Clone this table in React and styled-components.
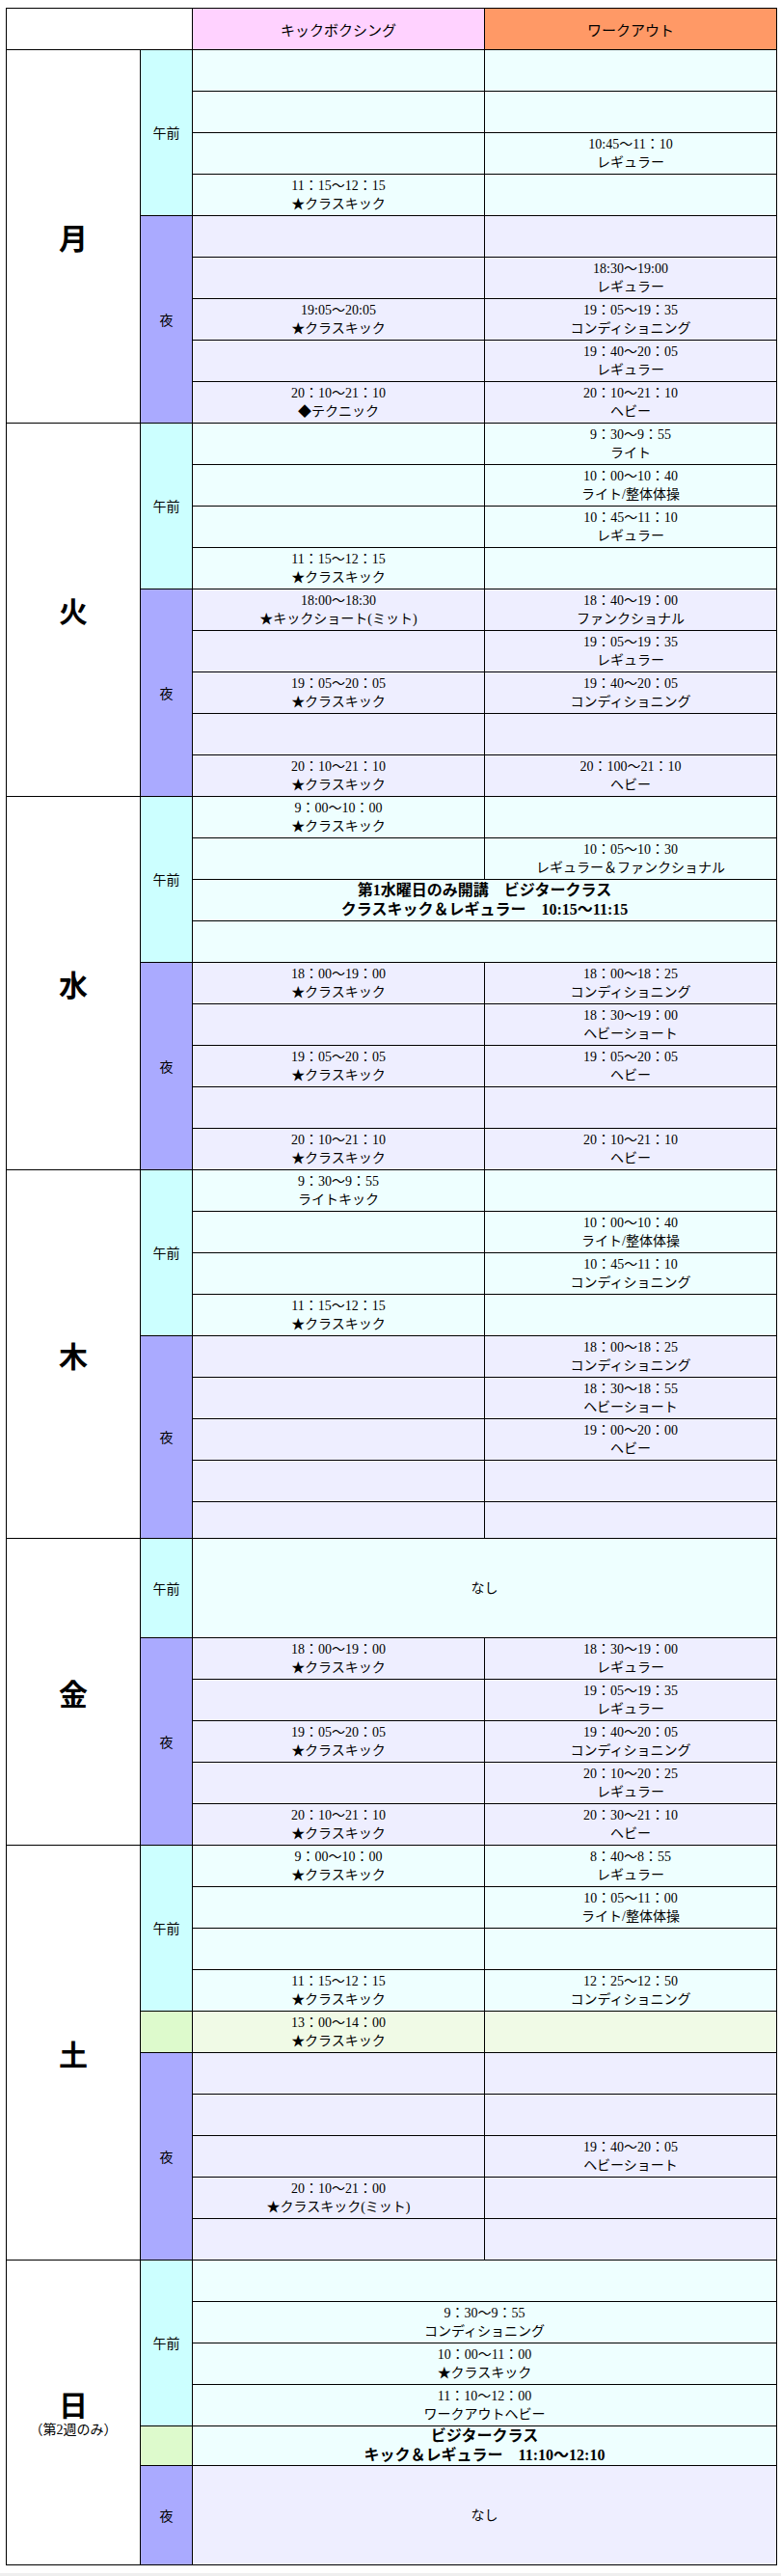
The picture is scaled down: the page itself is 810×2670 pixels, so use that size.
import React from "react";
import styled, { createGlobalStyle } from "styled-components";

const GlobalStyle = createGlobalStyle`
  html, body {
    margin: 0;
    padding: 0;
    background: #ffffff;
  }
  body {
    font-family: "Liberation Serif", "Noto Sans CJK JP", serif;
    color: #000000;
  }
`;

const TONES = {
  am: { head: "#ccffff", cell: "#eeffff" },
  pm: { head: "#aaaaff", cell: "#eeeeff" },
  green: { head: "#ddfacc", cell: "#f0fae6" },
  greenCyan: { head: "#ddfacc", cell: "#eeffff" },
};

const Page = styled.div`
  padding: 8px 0 0 6px;
`;

const Grid = styled.div`
  display: grid;
  box-sizing: border-box;
  width: 800px;
  padding: 1px;
  gap: 1px;
  background: #000000;
  grid-template-columns: 138px 53px 302px 302px;
  grid-template-rows: ${(p) => p.$rows};
`;

const Cell = styled.div`
  display: flex;
  flex-direction: column;
  align-items: center;
  justify-content: center;
  text-align: center;
  font-size: 14px;
  line-height: 19px;
  white-space: nowrap;
`;

const Corner = styled(Cell)`
  grid-column: 1 / span 2;
  background: #ffffff;
`;

const HeadCell = styled(Cell)`
  grid-column: ${(p) => p.$col};
  background: ${(p) => p.$bg};
  font-family: "Noto Sans CJK JP", sans-serif;
  font-size: 15px;
`;

const DayCell = styled(Cell)`
  grid-column: 1;
  grid-row: span ${(p) => p.$span};
  background: #ffffff;
`;

const DayLabel = styled.div`
  font-family: "Noto Sans CJK JP", sans-serif;
  font-size: 30px;
  font-weight: 700;
  line-height: 36px;
`;

const DaySub = styled.div`
  font-size: 14px;
  line-height: 20px;
`;

const PeriodCell = styled(Cell)`
  grid-column: 2;
  grid-row: span ${(p) => p.$span};
  background: ${(p) => TONES[p.$tone].head};
  font-family: "Noto Sans CJK JP", sans-serif;
`;

const SlotCell = styled(Cell)`
  grid-column: ${(p) => (p.$wide ? "3 / span 2" : p.$col)};
  background: ${(p) => TONES[p.$tone].cell};
  font-size: ${(p) => (p.$bold ? "16px" : "14px")};
  font-weight: ${(p) => (p.$bold ? 700 : 400)};
  line-height: ${(p) => (p.$bold ? "20px" : "19px")};
`;

const Line = styled.span`
  display: block;
`;

const BottomBand = styled.div`
  margin: 8px 0 0 -6px;
  width: 810px;
  height: 4px;
  background: #efefef;
`;

// row helpers
const r = (k, w, h = 42) => ({ k, w, h });
const m = (lines, opts = {}) => ({ span: lines, h: opts.h || 42, bold: !!opts.bold });

const KC = "★クラスキック";

const days = [
  {
    label: "月",
    sections: [
      {
        period: "午前",
        tone: "am",
        rows: [
          r("", ""),
          r("", ""),
          r("", ["10:45～11：10", "レギュラー"]),
          r(["11：15～12：15", KC], ""),
        ],
      },
      {
        period: "夜",
        tone: "pm",
        rows: [
          r("", ""),
          r("", ["18:30〜19:00", "レギュラー"]),
          r(["19:05〜20:05", KC], ["19：05～19：35", "コンディショニング"]),
          r("", ["19：40～20：05", "レギュラー"]),
          r(["20：10～21：10", "◆テクニック"], ["20：10～21：10", "ヘビー"]),
        ],
      },
    ],
  },
  {
    label: "火",
    sections: [
      {
        period: "午前",
        tone: "am",
        rows: [
          r("", ["9：30～9：55", "ライト"]),
          r("", ["10：00～10：40", "ライト/整体体操"]),
          r("", ["10：45～11：10", "レギュラー"]),
          r(["11：15～12：15", KC], ""),
        ],
      },
      {
        period: "夜",
        tone: "pm",
        rows: [
          r(["18:00〜18:30", "★キックショート(ミット)"], ["18：40～19：00", "ファンクショナル"]),
          r("", ["19：05～19：35", "レギュラー"]),
          r(["19：05～20：05", KC], ["19：40～20：05", "コンディショニング"]),
          r("", ""),
          r(["20：10～21：10", KC], ["20：100～21：10", "ヘビー"]),
        ],
      },
    ],
  },
  {
    label: "水",
    sections: [
      {
        period: "午前",
        tone: "am",
        rows: [
          r(["9：00～10：00", KC], ""),
          r("", ["10：05～10：30", "レギュラー＆ファンクショナル"]),
          m(["第1水曜日のみ開講　ビジタークラス", "クラスキック＆レギュラー　10:15～11:15"], { bold: true }),
          m([]),
        ],
      },
      {
        period: "夜",
        tone: "pm",
        rows: [
          r(["18：00～19：00", KC], ["18：00～18：25", "コンディショニング"]),
          r("", ["18：30～19：00", "ヘビーショート"]),
          r(["19：05～20：05", KC], ["19：05～20：05", "ヘビー"]),
          r("", ""),
          r(["20：10～21：10", KC], ["20：10～21：10", "ヘビー"]),
        ],
      },
    ],
  },
  {
    label: "木",
    sections: [
      {
        period: "午前",
        tone: "am",
        rows: [
          r(["9：30～9：55", "ライトキック"], ""),
          r("", ["10：00～10：40", "ライト/整体体操"]),
          r("", ["10：45～11：10", "コンディショニング"]),
          r(["11：15～12：15", KC], ""),
        ],
      },
      {
        period: "夜",
        tone: "pm",
        rows: [
          r("", ["18：00～18：25", "コンディショニング"]),
          r("", ["18：30～18：55", "ヘビーショート"]),
          r("", ["19：00～20：00", "ヘビー"]),
          r("", ""),
          r("", "", 37),
        ],
      },
    ],
  },
  {
    label: "金",
    sections: [
      {
        period: "午前",
        tone: "am",
        rows: [m(["なし"], { h: 102 })],
      },
      {
        period: "夜",
        tone: "pm",
        rows: [
          r(["18：00～19：00", KC], ["18：30～19：00", "レギュラー"]),
          r("", ["19：05～19：35", "レギュラー"]),
          r(["19：05～20：05", KC], ["19：40～20：05", "コンディショニング"]),
          r("", ["20：10～20：25", "レギュラー"]),
          r(["20：10～21：10", KC], ["20：30～21：10", "ヘビー"]),
        ],
      },
    ],
  },
  {
    label: "土",
    sections: [
      {
        period: "午前",
        tone: "am",
        rows: [
          r(["9：00～10：00", KC], ["8：40～8：55", "レギュラー"]),
          r("", ["10：05～11：00", "ライト/整体体操"]),
          r("", ""),
          r(["11：15～12：15", KC], ["12：25～12：50", "コンディショニング"]),
        ],
      },
      {
        period: "",
        tone: "green",
        rows: [r(["13：00～14：00", KC], "")],
      },
      {
        period: "夜",
        tone: "pm",
        rows: [
          r("", ""),
          r("", ""),
          r("", ["19：40～20：05", "ヘビーショート"]),
          r(["20：10～21：00", "★クラスキック(ミット)"], ""),
          r("", ""),
        ],
      },
    ],
  },
  {
    label: "日",
    sub: "（第2週のみ）",
    sections: [
      {
        period: "午前",
        tone: "am",
        rows: [
          m([]),
          m(["9：30～9：55", "コンディショニング"]),
          m(["10：00～11：00", KC]),
          m(["11：10～12：00", "ワークアウトヘビー"]),
        ],
      },
      {
        period: "",
        tone: "greenCyan",
        rows: [m(["ビジタークラス", "キック＆レギュラー　11:10～12:10"], { bold: true, h: 40 })],
      },
      {
        period: "夜",
        tone: "pm",
        rows: [m(["なし"], { h: 102 })],
      },
    ],
  },
];

const Lines = ({ value }) =>
  Array.isArray(value) ? value.map((t, i) => <Line key={i}>{t}</Line>) : value;

const rowHeights = ["42px"];
days.forEach((d) =>
  d.sections.forEach((s) => s.rows.forEach((row) => rowHeights.push(`${row.h}px`)))
);

export default function App() {
  return (
    <>
      <GlobalStyle />
      <Page>
        <Grid $rows={rowHeights.join(" ")}>
          <Corner />
          <HeadCell $col={3} $bg="#ffd2ff">キックボクシング</HeadCell>
          <HeadCell $col={4} $bg="#ff9966">ワークアウト</HeadCell>
          {days.map((d) => {
            const total = d.sections.reduce((n, s) => n + s.rows.length, 0);
            return (
              <React.Fragment key={d.label}>
                <DayCell $span={total}>
                  <DayLabel>{d.label}</DayLabel>
                  {d.sub && <DaySub>{d.sub}</DaySub>}
                </DayCell>
                {d.sections.map((s, si) => (
                  <React.Fragment key={si}>
                    <PeriodCell $span={s.rows.length} $tone={s.tone}>
                      {s.period}
                    </PeriodCell>
                    {s.rows.map((row, ri) =>
                      row.span ? (
                        <SlotCell key={ri} $wide $tone={s.tone} $bold={row.bold}>
                          <Lines value={row.span} />
                        </SlotCell>
                      ) : (
                        <React.Fragment key={ri}>
                          <SlotCell $col={3} $tone={s.tone}>
                            <Lines value={row.k} />
                          </SlotCell>
                          <SlotCell $col={4} $tone={s.tone}>
                            <Lines value={row.w} />
                          </SlotCell>
                        </React.Fragment>
                      )
                    )}
                  </React.Fragment>
                ))}
              </React.Fragment>
            );
          })}
        </Grid>
        <BottomBand />
      </Page>
    </>
  );
}
